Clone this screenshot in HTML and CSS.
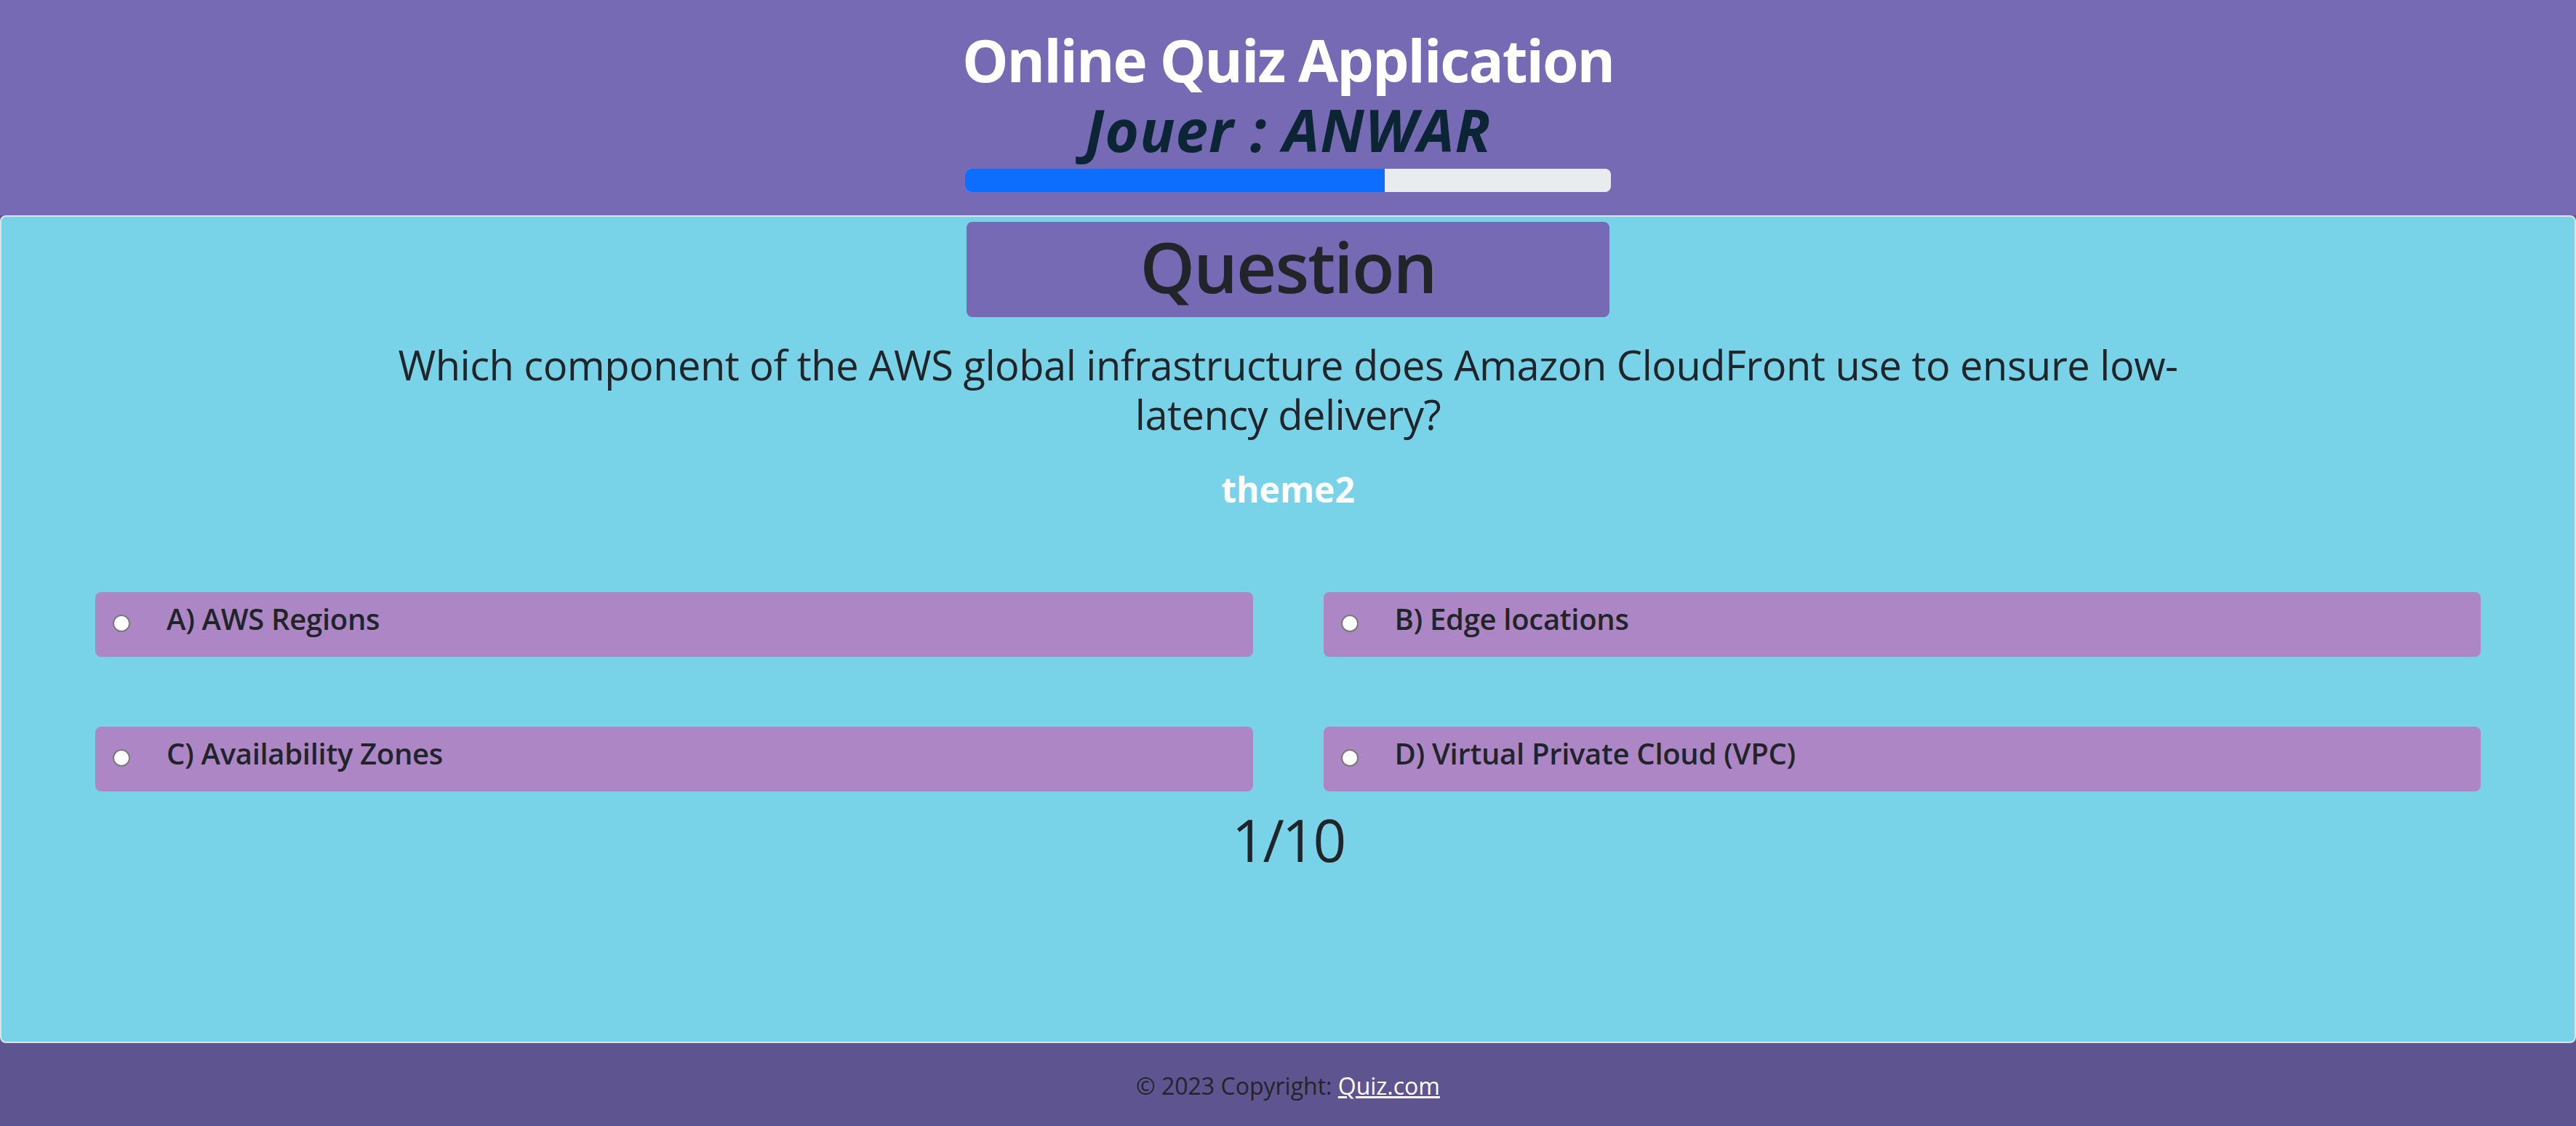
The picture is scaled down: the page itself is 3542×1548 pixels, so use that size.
FILE: index.html
```html
<!DOCTYPE html>
<html lang="en">
<head>
<meta charset="utf-8">
<title>Online Quiz Application</title>
<link rel="stylesheet" href="styles.css">
</head>
<body>
<header class="top">
  <h1 class="title">Online Quiz Application</h1>
  <h2 class="player">Jouer : ANWAR</h2>
  <div class="progress"><div class="progress-bar" style="width:65%"></div></div>
</header>
<main class="panel">
  <div class="q-head"><h1 class="q-head-text">Question</h1></div>
  <h3 class="q-text">Which component of the AWS global infrastructure does Amazon CloudFront use to ensure low-latency delivery?</h3>
  <h4 class="theme">theme2</h4>
  <div class="options">
    <label class="option"><input class="radio" type="radio" name="answer"><span class="opt-text">A) AWS Regions</span></label>
    <label class="option"><input class="radio" type="radio" name="answer"><span class="opt-text">B) Edge locations</span></label>
    <label class="option"><input class="radio" type="radio" name="answer"><span class="opt-text">C) Availability Zones</span></label>
    <label class="option"><input class="radio" type="radio" name="answer"><span class="opt-text">D) Virtual Private Cloud (VPC)</span></label>
  </div>
  <div class="count">1/10</div>
</main>
<footer class="foot">
  <span class="copy">© 2023 Copyright: </span><a class="foot-link" href="#">Quiz.com</a>
</footer>
</body>
</html>
```
FILE: styles.css
```css
* { box-sizing: border-box; }
html, body { margin: 0; padding: 0; }
body {
  font-family: "Open Sans", "Noto Sans", "Liberation Sans", sans-serif;
  color: #212529;
  background: #5e548f;
  width: 3542px;
  height: 1548px;
  overflow: hidden;
}
.top {
  background: #766ab4;
  height: 296px;
  padding-top: 34px;
  display: flex;
  flex-direction: column;
  align-items: center;
}
.title {
  margin: 0;
  font-size: 80px;
  line-height: 96px;
  font-weight: 700;
  letter-spacing: -2px;
  color: #ffffff;
}
.player {
  margin: 0;
  font-size: 80px;
  line-height: 96px;
  font-weight: 700;
  font-style: italic;
  letter-spacing: 1px;
  color: #0b2535;
}
.progress {
  margin-top: 6px;
  width: 888px;
  height: 32px;
  background: #e9ecef;
  border-radius: 8px;
  overflow: hidden;
  display: flex;
}
.progress-bar {
  background: #0d6efd;
  height: 100%;
}
.panel {
  height: 1138px;
  background: #79d3e8;
  border: 2px solid #dee2e6;
  border-radius: 8px;
  display: flex;
  flex-direction: column;
  align-items: center;
}
.q-head {
  margin-top: 7px;
  width: 884px;
  height: 131px;
  background: #766ab4;
  border-radius: 8px;
  padding-top: 3px;
  text-align: center;
}
.q-head-text {
  margin: 0;
  font-size: 96px;
  line-height: 115px;
  font-weight: 600;
  letter-spacing: -2px;
  color: #212529;
}
.q-text {
  margin: 31px 0 0;
  max-width: 2520px;
  font-size: 56px;
  line-height: 68px;
  font-weight: 400;
  letter-spacing: -0.5px;
  text-align: center;
  color: #212529;
}
.theme {
  margin: 41px 0 0;
  font-size: 48px;
  line-height: 58px;
  font-weight: 700;
  color: #ffffff;
}
.options {
  align-self: stretch;
  margin-top: 112px;
  padding: 0 129px;
  display: grid;
  grid-template-columns: 1fr 1fr;
  column-gap: 97px;
  row-gap: 96px;
}
.option {
  height: 89px;
  background: #ad87c5;
  border-radius: 8px;
  display: flex;
  align-items: flex-start;
  padding-left: 24px;
  padding-top: 13px;
}
.radio {
  appearance: none;
  -webkit-appearance: none;
  margin: 18px 0 0;
  width: 24px;
  height: 24px;
  border-radius: 50%;
  background: #ffffff;
  border: 2px solid #7a7a7a;
  flex: none;
}
.opt-text {
  margin-left: 50px;
  font-size: 40px;
  line-height: 48px;
  font-weight: 600;
  letter-spacing: -0.3px;
  color: #212529;
}
.count {
  margin-top: 18px;
  font-size: 80px;
  line-height: 96px;
  font-weight: 400;
  letter-spacing: -3px;
  color: #212529;
}
.foot {
  height: 114px;
  padding-top: 35px;
  text-align: center;
  font-size: 32px;
  line-height: 48px;
  color: #212529;
}
.foot-link {
  color: #ffffff;
  text-decoration: underline;
}
```
